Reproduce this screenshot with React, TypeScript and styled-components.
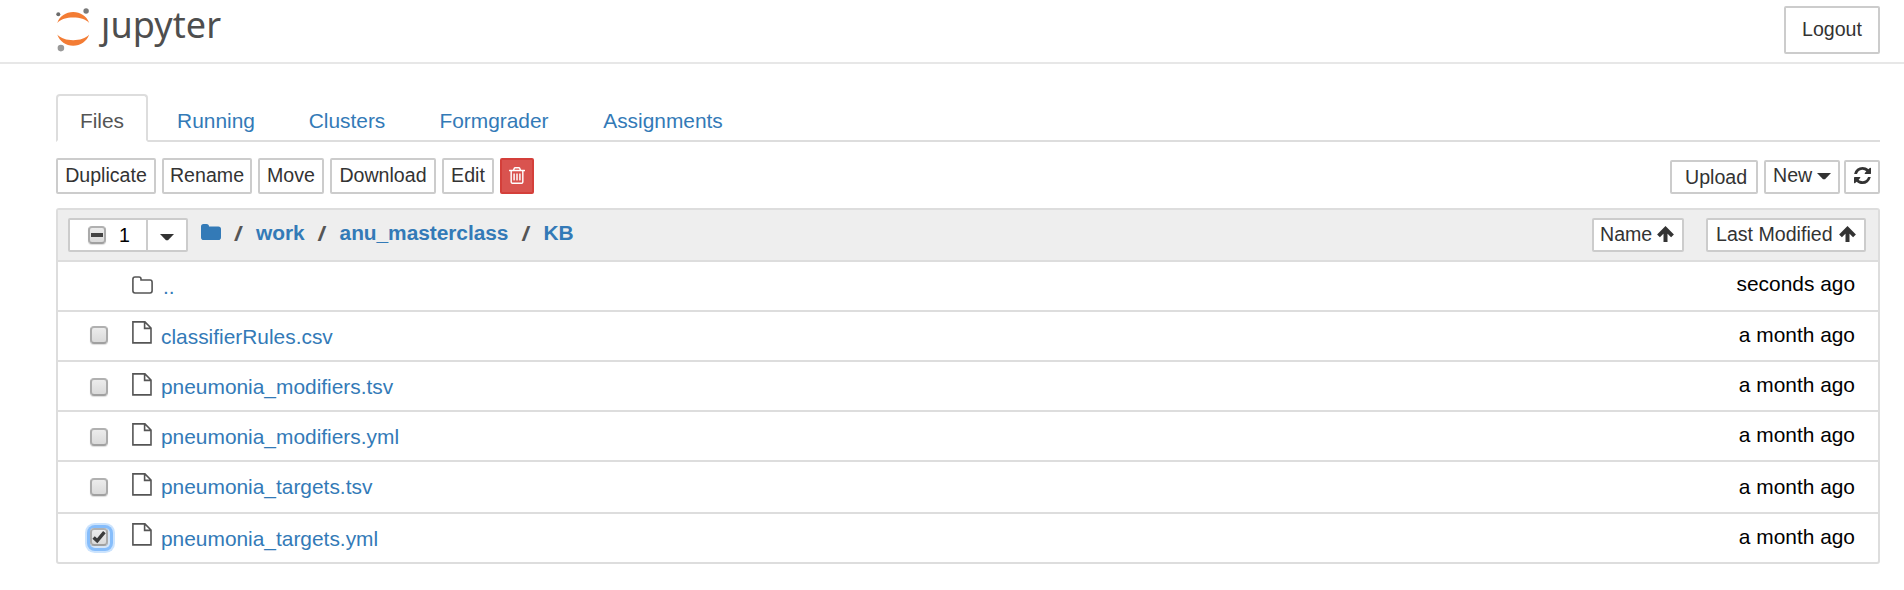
import React from "react";
import styled, { createGlobalStyle } from "styled-components";

const Global = createGlobalStyle`
  * { box-sizing: border-box; }
  body { margin: 0; background: #fff; overflow: hidden; }
  #root { font-family: "Liberation Sans", Arial, sans-serif; font-size: 20.9px; color: #000; }
`;

const Page = styled.div`
  width: 1904px;
  height: 590px;
`;

const Header = styled.header`
  height: 64px;
  border-bottom: 2px solid #e7e7e7;
  padding: 6px 24px 0 56px;
  display: flex;
  justify-content: space-between;
  align-items: flex-start;
`;

const Logo = styled.div`
  display: flex;
  height: 50px;
  align-items: flex-start;
`;

const Wordmark = styled.span`
  margin-left: 11px;
  margin-top: -6px;
  font: 36px/50px "Noto Sans", sans-serif;
  letter-spacing: 0.1px;
  color: #4e4e4e;
`;

const Button = styled.button<{
  $w: number;
  $h?: number;
  $up?: number;
  $left?: number;
  $gap?: number;
  $danger?: boolean;
}>`
  flex: none;
  width: ${(p) => p.$w}px;
  height: ${(p) => p.$h ?? 34}px;
  display: flex;
  align-items: center;
  gap: ${(p) => p.$gap ?? 0}px;
  justify-content: ${(p) => (p.$left ? "flex-start" : "center")};
  padding: 0 0 ${(p) => p.$up ?? 0}px ${(p) => p.$left ?? 0}px;
  border: 2px solid ${(p) => (p.$danger ? "#d43f3a" : "#ccc")};
  border-radius: 2px;
  background: ${(p) => (p.$danger ? "#d9534f" : "#fff")};
  color: ${(p) => (p.$danger ? "#fff" : "#333")};
  font: 19.6px/24px "Liberation Sans", Arial, sans-serif;
  white-space: nowrap;
  svg { flex: none; }
`;

const Main = styled.main`
  padding: 30px 24px 0 56px;
`;

const Tabs = styled.nav`
  display: flex;
  height: 48px;
  border-bottom: 2px solid #ddd;
`;

const Tab = styled.a<{ $w: number; $active?: boolean }>`
  width: ${(p) => p.$w}px;
  height: 48px;
  padding-top: 13px;
  text-align: center;
  line-height: 24px;
  border: 2px solid ${(p) => (p.$active ? "#ddd" : "transparent")};
  border-bottom: ${(p) => (p.$active ? "2px solid #fff" : "none")};
  border-radius: 4px 4px 0 0;
  color: ${(p) => (p.$active ? "#555" : "#337ab7")};
`;

const Toolbar = styled.div`
  display: flex;
  justify-content: space-between;
  align-items: flex-end;
  padding-top: 16px;
  height: 52px;
`;

const Group = styled.div<{ $gap: number }>`
  display: flex;
  gap: ${(p) => p.$gap}px;
`;

const FileList = styled.section`
  margin-top: 14px;
  border: 2px solid #ddd;
  border-radius: 3px;
`;

const ListHeader = styled.div`
  height: 50px;
  padding: 8px 12px 0 10px;
  display: flex;
  background: #eee;
`;

const Selector = styled.div`
  width: 120px;
  height: 34px;
  display: flex;
  background: #fff;
  border: 2px solid #ccc;
  border-radius: 2px;
`;

const SelectAll = styled.div`
  width: 78px;
  padding: 6px 0 0 18px;
  display: flex;
  border-right: 2px solid #ccc;
`;

const Count = styled.span`
  margin-left: 13px;
  margin-top: -3px;
  font-size: 19.6px;
  line-height: 24px;
`;

const CaretCell = styled.div`
  flex: 1;
  padding: 14px 0 0 12px;
  display: flex;
`;

const Crumbs = styled.div`
  flex: 1;
  display: flex;
  padding-left: 13px;
  line-height: 24px;
  margin-top: 3px;
  font-weight: bold;
  svg { margin-top: 3px; }
`;

const Slash = styled.span<{ $l: number }>`
  width: ${(p) => p.$l + 22}px;
  padding-left: ${(p) => p.$l}px;
  font: bold 21.5px/24px "Open Sans", sans-serif;
  color: #555;
`;

const Crumb = styled.a`
  color: #337ab7;
  letter-spacing: -0.05px;
`;

const Row = styled.div<{ $h: number }>`
  height: ${(p) => p.$h}px;
  border-top: 2px solid #ddd;
  padding: 0 23px 0 32px;
  display: flex;
  align-items: flex-start;
`;

const Drop = styled.span<{ $y: number; $w?: number }>`
  flex: none;
  display: flex;
  margin-top: ${(p) => p.$y}px;
  width: ${(p) => (p.$w ? p.$w + "px" : "auto")};
`;

const FileName = styled.a<{ $y: number; $l: number }>`
  flex: 1;
  margin-top: ${(p) => p.$y}px;
  padding-left: ${(p) => p.$l}px;
  line-height: 24px;
  color: #337ab7;
`;

const Modified = styled.span<{ $y: number }>`
  margin-top: ${(p) => p.$y}px;
  line-height: 24px;
`;

const Box = styled.span<{ $focus?: boolean }>`
  flex: none;
  width: 18px;
  height: 18px;
  display: flex;
  border: 2px solid #aaa;
  border-color: #b0b0b0 #aaa #a0a0a0;
  border-radius: 4px;
  background: linear-gradient(#ececec, #dadada);
  box-shadow: ${(p) =>
    p.$focus
      ? "1px 1px 0 1px #d5e5f7, 1px 1px 0 4px #86bdfb, 1px 1px 0 6px #cbe3fd"
      : "0 1px 1px #ddd"};
`;

const Dash = styled.span`
  width: 12px;
  height: 4px;
  margin: 5px 0 0 1px;
  background: #444;
`;

const Check = () => (
  <svg width="14" height="14" viewBox="0 0 14 14" fill="none" stroke="#3c3c3c" strokeWidth="3.4">
    <path d="M1.600 7.400 5.200 10.800 12.400 2.200" />
  </svg>
);

const FileIcon = () => (
  <svg width="20" height="23" viewBox="0 0 20 23" fill="none" stroke="#555" strokeWidth="1.6">
    <path d="M.9.9h12L19 7v14.9H.9zM12.6 1v6.4H19" />
  </svg>
);

const FolderOutline = () => (
  <svg width="21" height="18" viewBox="0 0 21 18" fill="none" stroke="#555" strokeWidth="1.6">
    <path d="M.9 3.2Q.9 1 3 1h4Q9 1 9 3v1h9q2.100 0 2.100 2.200v8.600q0 2.200-2.100 2.200H3Q.9 17 .9 14.800z" />
  </svg>
);

const Caret = ({ drop = 0 }: { drop?: number }) => (
  <svg width="14" height={7 + drop} viewBox={`0 ${-drop} 14 ${7 + drop}`} fill="#333">
    <path d="M0 0h14L8 6.300H6z" />
  </svg>
);

const ArrowUp = () => (
  <svg width="17" height="19" viewBox="0 -2 17 19" fill="none" stroke="#333" strokeWidth="4">
    <path d="M8.500 16V3M1.500 9.800 8.500 2.900l7 6.900" />
  </svg>
);

const Trash = () => (
  <svg width="16" height="17" viewBox="0 128 1408 1536" preserveAspectRatio="none" fill="#fff">
    <path d="M512 736v576q0 14-9 23t-23 9h-64q-14 0-23-9t-9-23v-576q0-14 9-23t23-9h64q14 0 23 9t9 23zm256 0v576q0 14-9 23t-23 9h-64q-14 0-23-9t-9-23v-576q0-14 9-23t23-9h64q14 0 23 9t9 23zm256 0v576q0 14-9 23t-23 9h-64q-14 0-23-9t-9-23v-576q0-14 9-23t23-9h64q14 0 23 9t9 23zm128 724v-948h-896v948q0 22 7 40.500t14.500 27 10.500 8.500h832q3 0 10.500-8.500t14.500-27 7-40.500zm-672-1076h448l-48-117q-7-9-17-11h-317q-10 2-17 11zm928 32v64q0 14-9 23t-23 9h-96v948q0 83-47 143.500t-113 60.500h-832q-66 0-113-58.500t-47-141.500v-952h-96q-14 0-23-9t-9-23v-64q0-14 9-23t23-9h309l70-167q15-37 54-63t79-26h320q40 0 79 26t54 63l70 167h309q14 0 23 9t9 23z" />
  </svg>
);

const Refresh = () => (
  <svg width="17" height="17" viewBox="0 0 1536 1536" fill="#333">
    <path d="M1511 928q0 5-1 7-64 268-268 434.500t-478 166.500q-146 0-282.500-55t-243.500-157l-129 129q-19 19-45 19t-45-19-19-45v-448q0-26 19-45t45-19h448q26 0 45 19t19 45-19 45l-137 137q71 66 161 102t187 36q134 0 250-65t186-179q11-17 53-117 8-23 30-23h192q13 0 22.500 9.500t9.500 22.500zm25-800v448q0 26-19 45t-45 19h-448q-26 0-45-19t-19-45 19-45l138-138q-148-137-349-137-134 0-250 65t-186 179q-11 17-53 117-8 23-30 23h-199q-13 0-22.500-9.500t-9.500-22.500v-7q65-268 270-434.500t480-166.500q146 0 284 55.500t245 156.500l130-129q19-19 45-19t45 19 19 45z" />
  </svg>
);

const files = [
  { name: "classifierRules.csv", h: 50, shift: 0, time: 11 },
  { name: "pneumonia_modifiers.tsv", h: 50, shift: 2, time: 11 },
  { name: "pneumonia_modifiers.yml", h: 50, shift: 2, time: 11 },
  { name: "pneumonia_targets.tsv", h: 52, shift: 2, time: 13 },
  { name: "pneumonia_targets.yml", h: 50, shift: 0, time: 11, checked: true },
];

export default function App() {
  return (
    <Page>
      <Global />
      <Header>
        <Logo>
          <svg width="34" height="46" viewBox="0 0 34 46">
            <path d="M1.300 17C3.500 10 10 6 17.200 6s13.600 4 16 11C29.500 13 24 11.500 17.200 11.500S5 13 1.300 17z" fill="#f37c34" />
            <path d="M1.300 28.600C5 32.600 10.500 34.200 17.200 34.200s12.300-1.600 16-5.600c-2.400 7-8.800 11.200-16 11.200S3.500 35.600 1.300 28.600z" fill="#f37c34" />
            <circle cx="2.300" cy="8.200" r="2" fill="#6b6b6b" />
            <circle cx="30.100" cy="5" r="2.700" fill="#7a7a7a" />
            <circle cx="4.900" cy="42.100" r="3.300" fill="#999" />
          </svg>
          <Wordmark>ȷupyter</Wordmark>
        </Logo>
        <Button $w={96} $h={48} $up={2}>Logout</Button>
      </Header>
      <Main>
        <Tabs>
          <Tab $w={92} $active>Files</Tab>
          <Tab $w={136}>Running</Tab>
          <Tab $w={126}>Clusters</Tab>
          <Tab $w={168}>Formgrader</Tab>
          <Tab $w={170}>Assignments</Tab>
        </Tabs>
        <Toolbar>
          <Group $gap={6}>
            <Button $w={100} $h={36} $up={2}>Duplicate</Button>
            <Button $w={90} $h={36} $up={2}>Rename</Button>
            <Button $w={66} $h={36} $up={2}>Move</Button>
            <Button $w={106} $h={36} $up={2}>Download</Button>
            <Button $w={52} $h={36} $up={2}>Edit</Button>
            <Button $w={34} $h={36} $up={1} $danger aria-label="Delete"><Trash /></Button>
          </Group>
          <Group $gap={4}>
            <Group $gap={6}>
              <Button $w={88} $left={13}>Upload</Button>
              <Button $w={76} $left={7} $up={4} $gap={5}>New <Caret drop={3} /></Button>
            </Group>
            <Button $w={36} $up={3} aria-label="Refresh"><Refresh /></Button>
          </Group>
        </Toolbar>
        <FileList>
          <ListHeader>
            <Selector>
              <SelectAll><Box><Dash /></Box><Count>1</Count></SelectAll>
              <CaretCell><Caret /></CaretCell>
            </Selector>
            <Crumbs>
              <svg width="20" height="16" viewBox="0 0 20 16" fill="#337ab7">
                <path d="M0 2.500Q0 0 2.500 0h3Q8 0 8 2.500h9.300Q20 2.500 20 5v8.200Q20 16 17.300 16H2.700Q0 16 0 13.200z" />
              </svg>
              <Slash $l={13}>/</Slash><Crumb>work</Crumb>
              <Slash $l={13}>/</Slash><Crumb>anu_masterclass</Crumb>
              <Slash $l={13}>/</Slash><Crumb>KB</Crumb>
            </Crumbs>
            <Group $gap={22}>
              <Button $w={92} $left={6} $up={3} $gap={5}>Name <ArrowUp /></Button>
              <Button $w={160} $left={8} $up={3} $gap={6}>Last Modified <ArrowUp /></Button>
            </Group>
          </ListHeader>
          <Row $h={50}>
            <Drop $y={0} $w={42} />
            <Drop $y={14}><FolderOutline /></Drop>
            <FileName $y={13} $l={10}>..</FileName>
            <Modified $y={10}>seconds ago</Modified>
          </Row>
          {files.map((f) => (
            <Row key={f.name} $h={f.h}>
              <Drop $y={14 + f.shift} $w={42}><Box $focus={f.checked}>{f.checked && <Check />}</Box></Drop>
              <Drop $y={9 + f.shift}><FileIcon /></Drop>
              <FileName $y={13} $l={9}>{f.name}</FileName>
              <Modified $y={f.time}>a month ago</Modified>
            </Row>
          ))}
        </FileList>
      </Main>
    </Page>
  );
}
